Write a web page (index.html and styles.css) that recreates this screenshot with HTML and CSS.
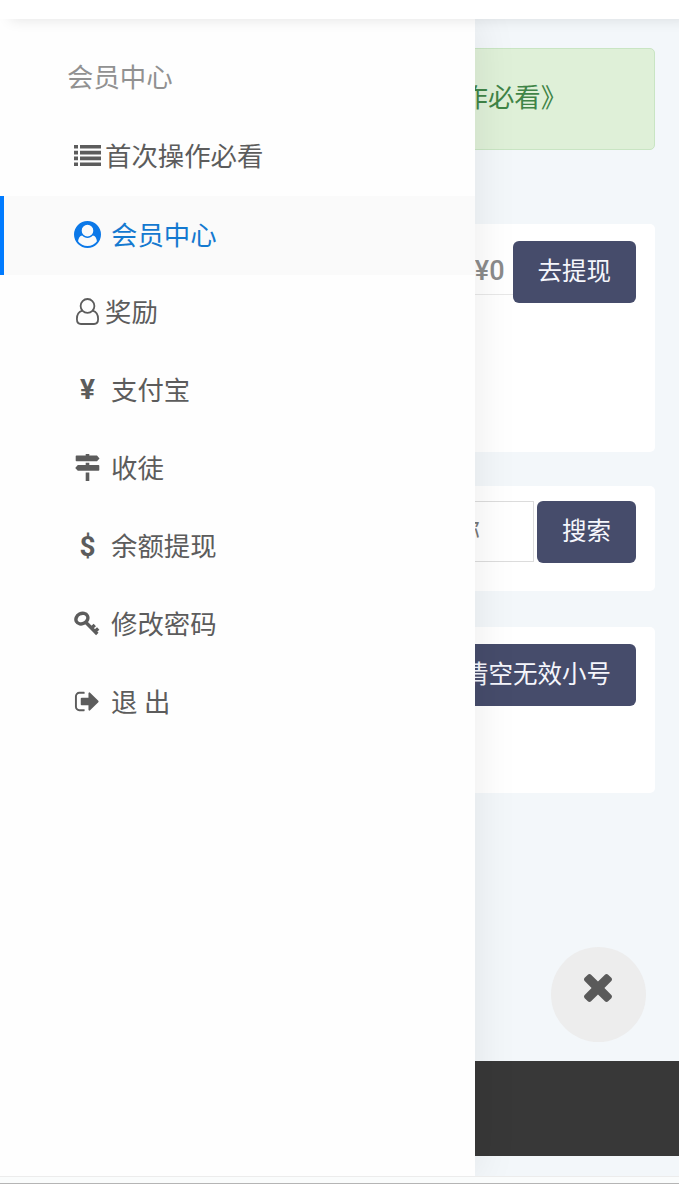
FILE: index.html
```html
<!DOCTYPE html>
<html lang="zh-CN">
<head>
    <meta charset="UTF-8">
    <meta name="viewport" content="width=device-width, initial-scale=1.0">
    <title>会员中心</title>
    <link rel="stylesheet" href="styles.css">
</head>
<body>
    <header class="topbar"></header>

    <div class="wrapper">
        <aside class="sidebar">
            <h2 class="nav-title">会员中心</h2>
            <ul class="nav">
                <li><a href="#" class="tight">
                    <svg class="icon" viewBox="0 0 27 27"><path d="M0 3h4v3.6H0zM6 3h21v3.6H6zM0 8.8h4v3.6H0zM6 8.8h21v3.6H6zM0 14.6h4v3.6H0zM6 14.6h21v3.6H6zM0 20.4h4V24H0zM6 20.4h21V24H6z"/></svg>
                    <span>首次操作必看</span></a></li>
                <li class="active"><a href="#">
                    <svg class="icon" viewBox="0 0 1792 1792"><path fill-rule="evenodd" d="M1523 1339q-22-155-87.5-257.5t-184.5-118.5q-67 74-159.5 115.5t-195.5 41.5-195.5-41.5-159.5-115.5q-119 16-184.5 118.5t-87.5 257.5q106 150 271 237.5t356 87.5 356-87.5 271-237.5zm-243-699q0-159-112.5-271.5t-271.5-112.5-271.5 112.5-112.5 271.5 112.5 271.5 271.5 112.5 271.5-112.5 112.5-271.5zm512 256q0 182-71 347.5t-190.5 286-285.5 191.5-349 71q-182 0-348-71t-286-191-191-286-71-348 71-348 191-286 286-191 348-71 348 71 286 191 191 286 71 348z"/></svg>
                    <span>会员中心</span></a></li>
                <li><a href="#" class="tight">
                    <svg class="icon line" viewBox="0 0 27 27"><circle cx="13.5" cy="7.9" r="6.9"/><path d="M8.3 12.6C4.6 13.6 2.9 17 2.9 21c0 3 1.6 5 4.1 5h13c2.500 0 4.100-2 4.100-5 0-4-1.700-7.400-5.400-8.400"/></svg>
                    <span>奖励</span></a></li>
                <li><a href="#">
                    <b class="icon sign">¥</b>
                    <span>支付宝</span></a></li>
                <li><a href="#">
                    <svg class="icon" viewBox="0 0 27 27"><path d="M11.700 0h3.600v1.500h7.700l2.500 2.900L23 7.300H2.500A.8.8 0 0 1 1.700 6.500V2.300A.8.8 0 0 1 2.500 1.500h9.200zM11.700 8.700h3.600v2.300h9.200a.8.8 0 0 1 .8.8v4.200a.8.8 0 0 1-.8.8H3.800L1.200 13.900l2.600-2.900h7.900zM11.700 18.500h3.600v8.500h-3.600z"/></svg>
                    <span>收徒</span></a></li>
                <li><a href="#">
                    <b class="icon sign dollar">$</b>
                    <span>余额提现</span></a></li>
                <li><a href="#">
                    <svg class="icon key" viewBox="0 0 27 27"><ellipse cx="7.900" cy="8.600" rx="6.200" ry="5.100" transform="rotate(-28 7.900 8.600)"/><path d="M11.500 12 23.300 24M17.200 18.200l3.600-3.300M20.600 21.700l3.600-3.300"/></svg>
                    <span>修改密码</span></a></li>
                <li><a href="#">
                    <svg class="icon" viewBox="0 0 1792 1792"><path d="M704 1440q0 4 1 20t.5 26.500-3 23.500-10 19.500-20.500 6.500h-320q-119 0-203.500-84.500t-84.500-203.500v-704q0-119 84.500-203.500t203.500-84.500h320q13 0 22.500 9.500t9.500 22.500q0 4 1 20t.5 26.500-3 23.500-10 19.500-20.500 6.500h-320q-66 0-113 47t-47 113v704q0 66 47 113t113 47h312l11.500 1 11.500 3 8 5.500 7 9 2 13.500zm928-544q0 26-19 45l-544 544q-19 19-45 19t-45-19-19-45v-288h-448q-26 0-45-19t-19-45v-384q0-26 19-45t45-19h448v-288q0-26 19-45t45-19 45 19l544 544q19 19 19 45z"/></svg>
                    <span>退 出</span></a></li>
            </ul>
        </aside>

        <main class="content">
            <div class="alert">《首次操作必看》</div>

            <section class="card balance">
                <div class="row">
                    <div class="amount">¥0</div>
                    <button class="btn">去提现</button>
                </div>
            </section>

            <section class="card search">
                <div class="row">
                    <input type="text" placeholder="昵称">
                    <button class="btn">搜索</button>
                </div>
            </section>

            <section class="card accounts">
                <div class="row">
                    <button class="btn">清空无效小号</button>
                </div>
            </section>
        </main>

        <footer class="footer"></footer>

        <button class="close-btn" aria-label="关闭">
            <svg viewBox="302 302 1188 1188"><path d="M1490 1322q0 40-28 68l-136 136q-28 28-68 28t-68-28l-294-294-294 294q-28 28-68 28t-68-28l-136-136q-28-28-28-68t28-68l294-294-294-294q-28-28-28-68t28-68l136-136q28-28 68-28t68 28l294 294 294-294q28-28 68-28t68 28l136 136q28 28 28 68t-28 68l-294 294 294 294q28 28 28 68z" transform="translate(0 -64)"/></svg>
        </button>
    </div>

    <div class="bottombar"></div>
</body>
</html>
```

FILE: styles.css
```css
* {
    box-sizing: border-box;
}

body {
    margin: 0;
    height: 1184px;
    display: flex;
    flex-direction: column;
    overflow: hidden;
    background: #f3f7fa;
    color: #5c5c5c;
    font-family: "Roboto", "Noto Sans CJK SC", sans-serif;
    font-size: 26.4px;
}

.topbar {
    position: relative;
    z-index: 3;
    height: 19px;
    flex: none;
    background: #fff;
    box-shadow: 10px 1px 14px rgba(0, 0, 0, 0.1);
}

.wrapper {
    position: relative;
    flex: 1;
    display: flex;
    flex-direction: column;
}

/* slide-out menu */
.sidebar {
    position: absolute;
    top: 0;
    left: 0;
    bottom: 0;
    z-index: 2;
    width: 475px;
    background: #fefefe;
    box-shadow: 2px 0 40px rgba(0, 0, 0, 0.08);
}

.nav-title {
    margin: 0;
    height: 98px;
    padding: 19px 0 0 67px;
    line-height: 80px;
    font-size: 26.4px;
    font-weight: 400;
    color: #919191;
}

.nav {
    margin: 0;
    padding: 0;
    list-style: none;
}

.nav li {
    height: 77.9px;
    border-left: 4px solid transparent;
}

.nav a {
    display: flex;
    align-items: center;
    gap: 10px;
    height: 100%;
    padding-left: 70px;
    color: inherit;
    text-decoration: none;
}

.nav a.tight {
    gap: 4px;
}

.nav a span {
    padding-bottom: 2px;
}

.nav .active {
    height: 79px;
    margin: 1px 0 -2px;
    background: #fafafa;
    border-left-color: #007bff;
    color: #1479d0;
}

.nav .active a {
    padding-bottom: 2px;
}

.icon {
    width: 27px;
    height: 27px;
    flex: none;
    fill: currentColor;
}

.active .icon {
    fill: #0b78e8;
}

.line {
    fill: none;
    stroke: currentColor;
    stroke-width: 1.8;
}

.key {
    fill: none;
    stroke: currentColor;
    stroke-width: 3.4;
}

.sign {
    line-height: 27px;
    text-align: center;
    font-size: 28px;
}

.dollar {
    line-height: 29px;
}

/* page behind the menu */
.content {
    padding: 29px 24px 0;
}

.alert {
    height: 102px;
    margin-bottom: 74px;
    padding-left: 331px;
    line-height: 98px;
    background: #dff0d8;
    border: 1px solid #c9e5c3;
    border-radius: 5px;
    color: #3f8447;
}

.card {
    padding: 17px 19px;
    background: #fff;
    border-radius: 5px;
}

.balance {
    height: 228px;
    margin-bottom: 34px;
}

.search {
    height: 105px;
    margin-bottom: 36px;
    padding-top: 15px;
}

.accounts {
    height: 166px;
}

.row {
    display: flex;
    justify-content: flex-end;
}

.amount {
    flex: 1;
    height: 54px;
    padding-right: 8px;
    border-bottom: 1px solid #e8e8e8;
    line-height: 61px;
    text-align: right;
    font-size: 27px;
    font-weight: 500;
    color: #8b8b8b;
}

input {
    flex: 1;
    min-width: 0;
    height: 61px;
    margin-right: 3px;
    padding: 0 0 0 387px;
    border: 1px solid #dcdcdc;
    background: #fff;
    font: inherit;
    font-size: 24.5px;
}

input::placeholder {
    color: #777;
}

.btn {
    height: 62px;
    padding: 0 25px 5px;
    border: none;
    border-radius: 6px;
    background: #464c6b;
    color: #f5f6fc;
    font: inherit;
    font-size: 24.5px;
    white-space: nowrap;
}

.footer {
    height: 95px;
    margin: auto 0 20px;
    background: #383838;
}

.close-btn {
    position: absolute;
    right: 33px;
    bottom: 134px;
    z-index: 1;
    width: 95px;
    height: 95px;
    padding: 0 1px 13px 0;
    border: none;
    border-radius: 50%;
    background: #ededed;
}

.close-btn svg {
    display: block;
    width: 28px;
    height: 28px;
    margin: auto;
    overflow: visible;
    fill: #5a5a5a;
}

.bottombar {
    position: relative;
    z-index: 3;
    height: 8px;
    flex: none;
    background: #fafcfc;
    border-top: 1px solid #ececec;
    border-bottom: 1px solid #b5b5b5;
}
```
